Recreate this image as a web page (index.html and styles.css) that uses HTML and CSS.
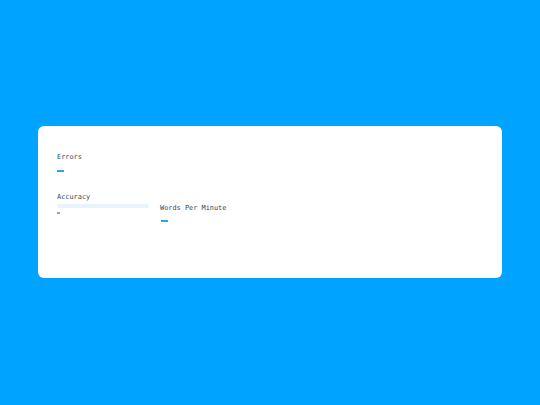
FILE: index.html
```html
<!DOCTYPE html>
<html>
<head>
<meta charset="utf-8">
<link rel="stylesheet" href="styles.css">
</head>
<body>
<div class="page">
  <div class="card">
    <div class="stats">
      <div class="col-left">
        <div class="stat">
          <div class="label">Errors</div>
          <div class="dash-blue"></div>
        </div>
        <div class="stat accuracy">
          <div class="label">Accuracy</div>
          <div class="bar"><div class="bar-fill" style="width:0%"></div></div>
          <div class="dash-gray"></div>
        </div>
      </div>
      <div class="col-right">
        <div class="label">Words Per Minute</div>
        <div class="dash-blue"></div>
      </div>
    </div>
  </div>
</div>
</body>
</html>
```
FILE: styles.css
```css
html, body {
  margin: 0;
  padding: 0;
}
body {
  background: #00a3ff;
  font-family: "DejaVu Sans Mono", "Liberation Mono", monospace;
  width: 540px;
  height: 405px;
  overflow: hidden;
}
.page {
  display: flex;
  justify-content: center;
  padding-top: 126px;
}
.card {
  width: 464px;
  height: 152px;
  box-sizing: border-box;
  background: #ffffff;
  border-radius: 6px;
  padding: 26px 19px;
}
.stats {
  display: flex;
  gap: 11px;
}
.col-left {
  width: 92px;
  display: flex;
  flex-direction: column;
}
.label {
  font-size: 6.9px;
  line-height: 10px;
  color: #2b4c5c;
  white-space: nowrap;
}
.dash-blue {
  width: 7px;
  height: 2px;
  background: #2aa3e8;
  margin-top: 8px;
}
.accuracy {
  margin-top: 20px;
}
.bar {
  margin-top: 2px;
  height: 4px;
  border-radius: 2px;
  background: #e8f4fb;
}
.bar-fill {
  height: 100%;
  background: #2aa3e8;
}
.dash-gray {
  width: 3px;
  height: 2px;
  background: #9aa5ab;
  margin-top: 4px;
}
.col-right {
  padding-top: 51px;
}
.col-right .dash-blue {
  margin-top: 7px;
  margin-left: 1px;
}
```
